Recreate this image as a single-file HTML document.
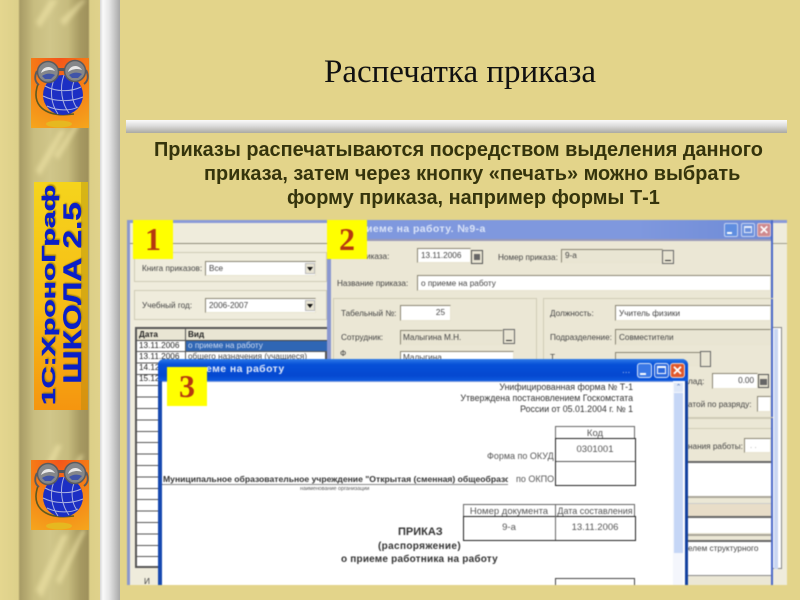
<!DOCTYPE html>
<html lang="ru"><head><meta charset="utf-8"><title>Распечатка приказа</title>
<style>
html,body{margin:0;padding:0;width:800px;height:600px;overflow:hidden;background:#e3d48a}
*{box-sizing:border-box}
.a{position:absolute}
.t{position:absolute;white-space:nowrap;font-family:"Liberation Sans",sans-serif;font-size:8.2px;line-height:11px;color:#444}
.f{position:absolute;background:#fff;border:1px solid #8b8775;border-right-color:#e8e4d0;border-bottom-color:#e8e4d0}
.d{background:#e9e5d3}
.b{position:absolute;background:#e9e5d3;border:1px solid #555}
.g{position:absolute;border:1px solid #cfcbb6}
.y{position:absolute;background:#ffff00;color:#b5370f;font:bold 32px/39px "Liberation Serif",serif;text-align:center}
.l{position:absolute;background:#333}
.cell{position:absolute;font-family:"Liberation Sans",sans-serif;font-size:9.5px;color:#555;text-align:center;white-space:nowrap}
.m{position:absolute;white-space:nowrap;font-weight:bold;font-family:"Liberation Sans",sans-serif;color:#0a1fc8;text-align:center;text-shadow:1px 1px 1px #a88810}
</style></head><body>
<!-- left strip -->
<div class="a" style="left:0;top:0;width:100px;height:600px;background:linear-gradient(90deg,#e4d68f 0,#ddd08a 18px,#a89c66 20px,#b5a970 26px,#c8bd80 34px,#d0c68a 50px,#c6bb7e 68px,#a79a62 80px,#9f915c 88px,#dccf88 90px,#e0d28b 100px)"></div>
<svg class="a" style="left:0;top:0" width="100" height="600"><defs><filter id="bl"><feGaussianBlur stdDeviation="2"/></filter>
<radialGradient id="or" cx="50%" cy="0%" r="110%"><stop offset="0" stop-color="#f4551a"/><stop offset=".5" stop-color="#f57f16"/><stop offset="1" stop-color="#f5a51d"/></radialGradient>
<linearGradient id="bn" x1="0" y1="0" x2="0" y2="1"><stop offset="0" stop-color="#f5d41c"/><stop offset=".55" stop-color="#f6bc16"/><stop offset="1" stop-color="#f5950f"/></linearGradient>
<g id="globe"><rect width="58" height="70" fill="url(#or)"/>
<path d="M7 26C0 46 12 60 43 56" fill="none" stroke="#5e5a20" stroke-width="1.6"/>
<ellipse cx="28" cy="66" rx="13" ry="3.5" fill="#e6b820"/>
<circle cx="32" cy="37" r="20" fill="#1c2fc4"/>
<g fill="none" stroke="#a9b0e0" stroke-width="1"><path d="M14 28C25 34 40 34 50 29M12 38C24 44 40 44 52 39M16 48C26 53 40 53 47 49M24 19C18 32 20 46 27 56M33 17C28 30 31 46 38 55M44 21C39 31 41 44 46 50"/></g>
<circle cx="17" cy="14" r="10.5" fill="#85878a" stroke="#5a5b5e" stroke-width="1.5"/><path d="M10 15C12 8 20 7 24 13C20 11 14 12 10 15Z" fill="#e8e8e8"/><path d="M11 18C15 15 20 15 24 17L20 21H14Z" fill="#4054a8"/>
<circle cx="44" cy="13" r="10.5" fill="#85878a" stroke="#5a5b5e" stroke-width="1.5"/><path d="M37 14C39 7 47 6 51 12C47 10 41 11 37 14Z" fill="#e8e8e8"/><path d="M38 17C42 14 47 14 51 16L47 20H41Z" fill="#4054a8"/>
<rect x="27" y="10" width="7" height="3" fill="#55565a"/>
<path d="M6 13C3 19 4 24 8 27M55 12C58 18 57 23 53 26" fill="none" stroke="#5a5b5e" stroke-width="2"/>
</g></defs>
<g filter="url(#bl)" fill="#e9dea0" opacity=".75">
<path d="M36 22L50 0H58L40 28ZM36 170L60 130H66L40 176ZM54 155L78 120H82L58 160ZM34 490L56 445H62L38 498ZM52 500L80 455H84L56 505ZM36 590L62 535H68L42 598ZM56 580L82 530H86L60 585ZM60 20L82 0H86L64 26Z"/></g>
<use href="#globe" x="31" y="58"/>
<use href="#globe" x="31" y="460"/>
<rect x="34" y="182" width="54" height="228" fill="url(#bn)"/>
<rect x="81" y="182" width="7" height="228" fill="#a98a10" opacity=".4"/>
</svg>
<div class="a" style="left:34px;top:182px;width:54px;height:228px;overflow:hidden">
<div class="m" style="left:-99px;top:99px;width:228px;height:28px;font-size:18px;line-height:28px;transform:rotate(-90deg) scale(1.68,1);-webkit-text-stroke:.4px #0a1fc8">1С:ХроноГраф</div>
<div class="m" style="left:-75px;top:97px;width:228px;height:28px;font-size:25px;line-height:28px;transform:rotate(-90deg) scale(1.33,1);-webkit-text-stroke:.4px #0a1fc8">ШКОЛА 2.5</div>
</div>
<div class="a" style="left:100px;top:0;width:20px;height:600px;background:linear-gradient(90deg,#d6d6d6 0,#fafafa 3px,#e6e6e6 9px,#a8a8a8 20px)"></div>
<!-- title -->
<div class="a" style="left:120px;top:53px;width:680px;text-align:center;font:33px/38px 'Liberation Serif',serif;color:#111">Распечатка приказа</div>
<div class="a" style="left:126px;top:120px;width:661px;height:13px;background:linear-gradient(#fbfbfb,#dcdcdc 45%,#aaa9a2)"></div>
<div class="a" style="left:154px;top:138px;white-space:nowrap;font:bold 19.9px/24px 'Liberation Sans',sans-serif;color:#35340c;filter:blur(.3px)">Приказы распечатываются посредством выделения данного</div>
<div class="a" style="left:204px;top:162px;white-space:nowrap;font:bold 19.9px/24px 'Liberation Sans',sans-serif;color:#35340c;filter:blur(.3px)">приказа, затем через кнопку «печать» можно выбрать</div>
<div class="a" style="left:287px;top:186px;white-space:nowrap;font:bold 19.9px/24px 'Liberation Sans',sans-serif;color:#35340c;filter:blur(.3px)">форму приказа, например формы Т-1</div>

<!-- screenshot -->
<div class="a" style="left:127px;top:220px;width:660px;height:365px;overflow:hidden;background:#efecdc;filter:blur(.45px)">
<div style="position:absolute;left:0;top:0;width:100%;height:365px;transform:translate(-127px,-220px)">
<!-- window 1 -->
<div class="a" style="left:127px;top:220px;width:660px;height:3px;background:#8a9ad8"></div>
<div class="a" style="left:127px;top:220px;width:3px;height:365px;background:#8a97cc"></div>
<div class="a" style="left:130px;top:243px;width:660px;height:1px;background:#8f8c7a"></div>
<div class="g" style="left:134px;top:252px;width:193px;height:30px"></div>
<div class="g" style="left:134px;top:290px;width:193px;height:30px"></div>
<div class="t" style="left:142px;top:263px">Книга приказов:</div>
<div class="f" style="left:205px;top:261px;width:111px;height:15px"><span class="t" style="left:3px;top:1px">Все</span></div>
<div class="b" style="left:305px;top:263px;width:10px;height:11px;border-color:#bbb"></div><div class="a" style="left:307px;top:267px;border:3px solid transparent;border-top:4px solid #111"></div>
<div class="t" style="left:142px;top:300px">Учебный год:</div>
<div class="f" style="left:205px;top:298px;width:111px;height:15px"><span class="t" style="left:3px;top:1px">2006-2007</span></div>
<div class="b" style="left:305px;top:300px;width:10px;height:11px;border-color:#bbb"></div><div class="a" style="left:307px;top:304px;border:3px solid transparent;border-top:4px solid #111"></div>
<!-- table -->
<div class="a" style="left:135px;top:327px;width:192px;height:241px;background:#fff;border:2px solid #555"></div>
<div class="a" style="left:137px;top:329px;width:190px;height:11px;background:#e9e5d3"></div>
<div class="t" style="left:139px;top:329px;font-weight:bold;color:#222">Дата</div>
<div class="t" style="left:188px;top:329px;font-weight:bold;color:#222">Вид</div>
<div class="a" style="left:137px;top:340px;width:190px;height:1px;background:#444"></div>
<div class="a" style="left:185px;top:329px;width:1px;height:37px;background:#555"></div>
<div class="a" style="left:186px;top:341px;width:141px;height:10px;background:#2f66b4"></div>
<div class="t" style="left:139px;top:340px;color:#222">13.11.2006</div>
<div class="t" style="left:188px;top:340px;color:#cfdcf2">о приеме на работу</div>
<div class="t" style="left:139px;top:351px;color:#222">13.11.2006</div>
<div class="t" style="left:188px;top:351px">общего назначения (учащиеся)</div>
<div class="t" style="left:139px;top:362px;color:#222">14.12</div>
<div class="t" style="left:139px;top:373px;color:#222">15.12</div>
<div class="a" style="left:137px;top:351px;width:190px;height:217px;background:repeating-linear-gradient(#555 0,#555 1px,transparent 1px,transparent 11.4px)"></div>
<div class="t" style="left:144px;top:576px">И</div>
<!-- window 2 -->
<div class="a" style="left:327px;top:220px;width:446px;height:365px;background:#ebe7d5;border-left:4px solid #8a97d0;border-right:2px solid #4a68c8"></div>
<div class="a" style="left:331px;top:220px;width:440px;height:20px;background:linear-gradient(90deg,#7f98de,#7f98de 70%,#6d8ad6)"></div>
<div class="a" style="left:331px;top:239px;width:440px;height:2px;background:#9a9ab8"></div>
<div class="t" style="left:366px;top:224px;color:#dce5f8;font-weight:bold;font-size:10.5px;letter-spacing:.4px">иеме на работу. №9-а</div>
<div class="a" style="left:724px;top:223px;width:14px;height:14px;background:#5f8ee0;border-radius:2px;border:1px solid #c6d4f2"></div><div class="a" style="left:727px;top:232px;width:5px;height:2px;background:#fff"></div>
<div class="a" style="left:741px;top:223px;width:14px;height:14px;background:#6b90dc;border-radius:2px;border:1px solid #c6d4f2"></div><div class="a" style="left:744px;top:226px;width:8px;height:7px;border:1px solid #e8eefb;border-top-width:2px"></div>
<div class="a" style="left:757px;top:223px;width:14px;height:14px;background:#cf8a8e;border-radius:2px;border:1px solid #e2c8d0;color:#fff;font:bold 12px/12px 'Liberation Sans',sans-serif;text-align:center">✕</div>
<div class="t" style="left:366px;top:251px">иказа:</div>
<div class="f" style="left:417px;top:248px;width:54px;height:15px"><span class="t" style="left:3px;top:1px">13.11.2006</span></div>
<div class="b" style="left:471px;top:250px;width:12px;height:14px"></div><div class="a" style="left:474px;top:254px;width:6px;height:6px;background:#666"></div>
<div class="t" style="left:498px;top:252px">Номер приказа:</div>
<div class="f" style="left:561px;top:249px;width:102px;height:14px;background:#e9e5d3"><span class="t" style="left:3px;top:0">9-а</span></div>
<div class="b" style="left:662px;top:250px;width:12px;height:14px;border-color:#666"></div><div class="a" style="left:665px;top:260px;width:6px;height:1px;background:#333"></div>
<div class="t" style="left:337px;top:278px">Название приказа:</div>
<div class="f" style="left:417px;top:275px;width:354px;height:16px"><span class="t" style="left:3px;top:2px">о приеме на работу</span></div>
<div class="g" style="left:333px;top:298px;width:204px;height:100px"></div>
<div class="g" style="left:543px;top:298px;width:230px;height:120px;border-right:0"></div>
<div class="t" style="left:341px;top:308px">Табельный №:</div>
<div class="f" style="left:400px;top:305px;width:51px;height:16px;text-align:right;font:8.2px/14px 'Liberation Sans',sans-serif;color:#444;padding-right:5px">25</div>
<div class="t" style="left:341px;top:332px">Сотрудник:</div>
<div class="f d" style="left:400px;top:330px;width:103px;height:15px"><span class="t" style="left:2px;top:1px">Малыгина М.Н.</span></div>
<div class="b" style="left:503px;top:329px;width:12px;height:15px;border-color:#666"></div><div class="a" style="left:506px;top:340px;width:6px;height:1px;background:#333"></div>
<div class="t" style="left:340px;top:348px">Ф</div>
<div class="f" style="left:400px;top:351px;width:114px;height:12px"><span class="t" style="left:2px;top:0">Малыгина</span></div>
<div class="t" style="left:550px;top:308px">Должность:</div>
<div class="f" style="left:615px;top:305px;width:156px;height:16px"><span class="t" style="left:3px;top:2px">Учитель физики</span></div>
<div class="t" style="left:550px;top:332px">Подразделение:</div>
<div class="f d" style="left:615px;top:329px;width:156px;height:16px"><span class="t" style="left:3px;top:2px">Совместители</span></div>
<div class="f d" style="left:615px;top:352px;width:86px;height:14px"></div>
<div class="b" style="left:700px;top:351px;width:11px;height:16px;border-color:#666"></div>
<div class="t" style="left:550px;top:352px">Т</div>
<div class="t" style="left:688px;top:376px">лад:</div>
<div class="f" style="left:712px;top:373px;width:46px;height:16px;text-align:right;font:8.2px/14px 'Liberation Sans',sans-serif;color:#444;padding-right:3px">0.00</div>
<div class="b" style="left:758px;top:374px;width:11px;height:14px"></div><div class="a" style="left:760px;top:379px;width:7px;height:6px;background:#666"></div>
<div class="t" style="left:688px;top:399px">атой по разряду:</div>
<div class="f" style="left:757px;top:396px;width:14px;height:16px"></div>
<div class="a" style="left:688px;top:418px;width:83px;height:1px;background:#cfcbb6"></div>
<div class="a" style="left:688px;top:428px;width:83px;height:1px;background:#cfcbb6"></div>
<div class="t" style="left:688px;top:441px">нания работы:</div>
<div class="f" style="left:744px;top:438px;width:27px;height:15px;font:8px/13px 'Liberation Sans',sans-serif;color:#aaa;padding-left:5px">. .</div>
<div class="a" style="left:688px;top:461px;width:83px;height:2px;background:#666"></div>
<div class="a" style="left:688px;top:463px;width:83px;height:33px;background:#fff"></div>
<div class="a" style="left:688px;top:496px;width:83px;height:2px;background:#aaa79a"></div>
<div class="a" style="left:688px;top:503px;width:83px;height:1px;background:#ccc"></div>
<div class="a" style="left:688px;top:504px;width:83px;height:12px;background:#e8ddc8"></div>
<div class="a" style="left:688px;top:516px;width:83px;height:2px;background:#666"></div>
<div class="a" style="left:688px;top:518px;width:83px;height:15px;background:#fff"></div>
<div class="a" style="left:688px;top:534px;width:83px;height:2px;background:#aaa79a"></div>
<div class="a" style="left:688px;top:540px;width:83px;height:2px;background:#666"></div>
<div class="a" style="left:688px;top:542px;width:83px;height:33px;background:#fff"></div>
<div class="t" style="left:688px;top:543px">елем структурного</div>
<div class="a" style="left:688px;top:575px;width:83px;height:1px;background:#888"></div>
<!-- right behind -->
<div class="a" style="left:773px;top:243px;width:14px;height:1px;background:#a09d8c"></div>
<div class="a" style="left:773px;top:327px;width:9px;height:242px;background:#fff;border:1px solid #888;border-left:0"></div>
<div class="a" style="left:774px;top:329px;width:4px;height:240px;background:#c9d6f2"></div>
<!-- window 3 -->
<div class="a" style="left:158px;top:359px;width:530px;height:226px;background:#fff;border-left:4px solid #1648b0;border-right:3px solid #12409f;border-radius:6px 6px 0 0"></div>
<div class="a" style="left:158px;top:359px;width:530px;height:22px;border-radius:6px 6px 0 0;background:linear-gradient(#2f7be8,#0650d8 25%,#0548d0 75%,#0f5ce0)"></div>
<div class="t" style="left:206px;top:363px;color:#dfe8fa;font:bold 10.5px/13px 'Liberation Sans',sans-serif;letter-spacing:.4px">еме на работу</div>
<div class="t" style="left:622px;top:365px;color:#9db6ea;font-size:10px">...</div>
<div class="a" style="left:637px;top:363px;width:15px;height:15px;background:#3a78e6;border-radius:3px;border:1px solid #d8e4fa"></div><div class="a" style="left:640px;top:373px;width:6px;height:2px;background:#fff"></div>
<div class="a" style="left:654px;top:363px;width:15px;height:15px;background:#2c68dc;border-radius:3px;border:1px solid #d8e4fa"></div><div class="a" style="left:657px;top:366px;width:9px;height:8px;border:1px solid #fff;border-top-width:2px"></div>
<div class="a" style="left:670px;top:363px;width:15px;height:15px;background:#e0582c;border-radius:3px;border:1px solid #f4d8d0;color:#fff;font:bold 13px/13px 'Liberation Sans',sans-serif;text-align:center">✕</div>
<div class="a" style="left:673px;top:382px;width:10px;height:203px;background:#f4f6fc"></div>
<div class="a" style="left:674px;top:383px;width:9px;height:9px;background:#dde7f8;color:#5577b8;font:7px/9px 'Liberation Sans',sans-serif;text-align:center">⌃</div>
<div class="a" style="left:674px;top:393px;width:9px;height:160px;background:#c5d6f6"></div>
<div class="a" style="left:162px;top:381px;width:511px;height:1px;background:#7f9cdc"></div>
<div class="t" style="right:27px;top:382px;font-size:8.8px;color:#333">Унифицированная форма № Т-1</div>
<div class="t" style="right:27px;top:393px;font-size:8.8px;color:#333">Утверждена постановлением Госкомстата</div>
<div class="t" style="right:27px;top:404px;font-size:8.8px;color:#333">России от 05.01.2004 г. № 1</div>
<div class="a" style="left:555px;top:426px;width:80px;height:13px;border:1px solid #666"></div>
<div class="cell" style="left:555px;top:428px;width:80px">Код</div>
<div class="a" style="left:555px;top:438px;width:81px;height:48px;border:1.5px solid #222"></div>
<div class="a" style="left:556px;top:461px;width:79px;height:1px;background:#555"></div>
<div class="cell" style="left:555px;top:444px;width:80px">0301001</div>
<div class="t" style="left:487px;top:451px;font-size:9px;color:#555">Форма по ОКУД</div>
<div class="t" style="left:163px;top:474px;font:bold 8.6px/11px 'Liberation Sans',sans-serif;color:#333;width:345px;overflow:hidden">Муниципальное образовательное учреждение "Открытая (сменная) общеобразов</div>
<div class="a" style="left:162px;top:484px;width:346px;height:1px;background:#888"></div>
<div class="t" style="left:516px;top:474px;font-size:9px;color:#555">по ОКПО</div>
<div class="t" style="left:300px;top:485px;font-size:5.4px;line-height:9px;color:#555">наименование организации</div>
<div class="a" style="left:463px;top:504px;width:172px;height:13px;border:1px solid #666"></div>
<div class="cell" style="left:463px;top:506px;width:92px">Номер документа</div>
<div class="cell" style="left:555px;top:506px;width:80px;font-size:9px">Дата составления</div>
<div class="a" style="left:463px;top:516px;width:173px;height:25px;border:1.5px solid #222"></div>
<div class="a" style="left:555px;top:504px;width:1px;height:36px;background:#666"></div>
<div class="cell" style="left:463px;top:522px;width:92px">9-а</div>
<div class="cell" style="left:555px;top:522px;width:80px">13.11.2006</div>
<div class="t" style="left:398px;top:526px;font:bold 11px/13px 'Liberation Sans',sans-serif;color:#333">ПРИКАЗ</div>
<div class="t" style="left:378px;top:541px;font:bold 10px/12px 'Liberation Sans',sans-serif;color:#333;letter-spacing:.35px">(распоряжение)</div>
<div class="t" style="left:341px;top:554px;font:bold 10px/12px 'Liberation Sans',sans-serif;color:#333;letter-spacing:.2px">о приеме работника на работу</div>
<div class="a" style="left:555px;top:578px;width:80px;height:7px;border:1px solid #444;border-bottom:0"></div>
<!-- labels -->
<div class="y" style="left:133px;top:220px;width:40px;height:39px">1</div>
<div class="y" style="left:327px;top:220px;width:40px;height:39px">2</div>
<div class="y" style="left:167px;top:367px;width:40px;height:39px">3</div>
</div>
</div>
</body></html>
